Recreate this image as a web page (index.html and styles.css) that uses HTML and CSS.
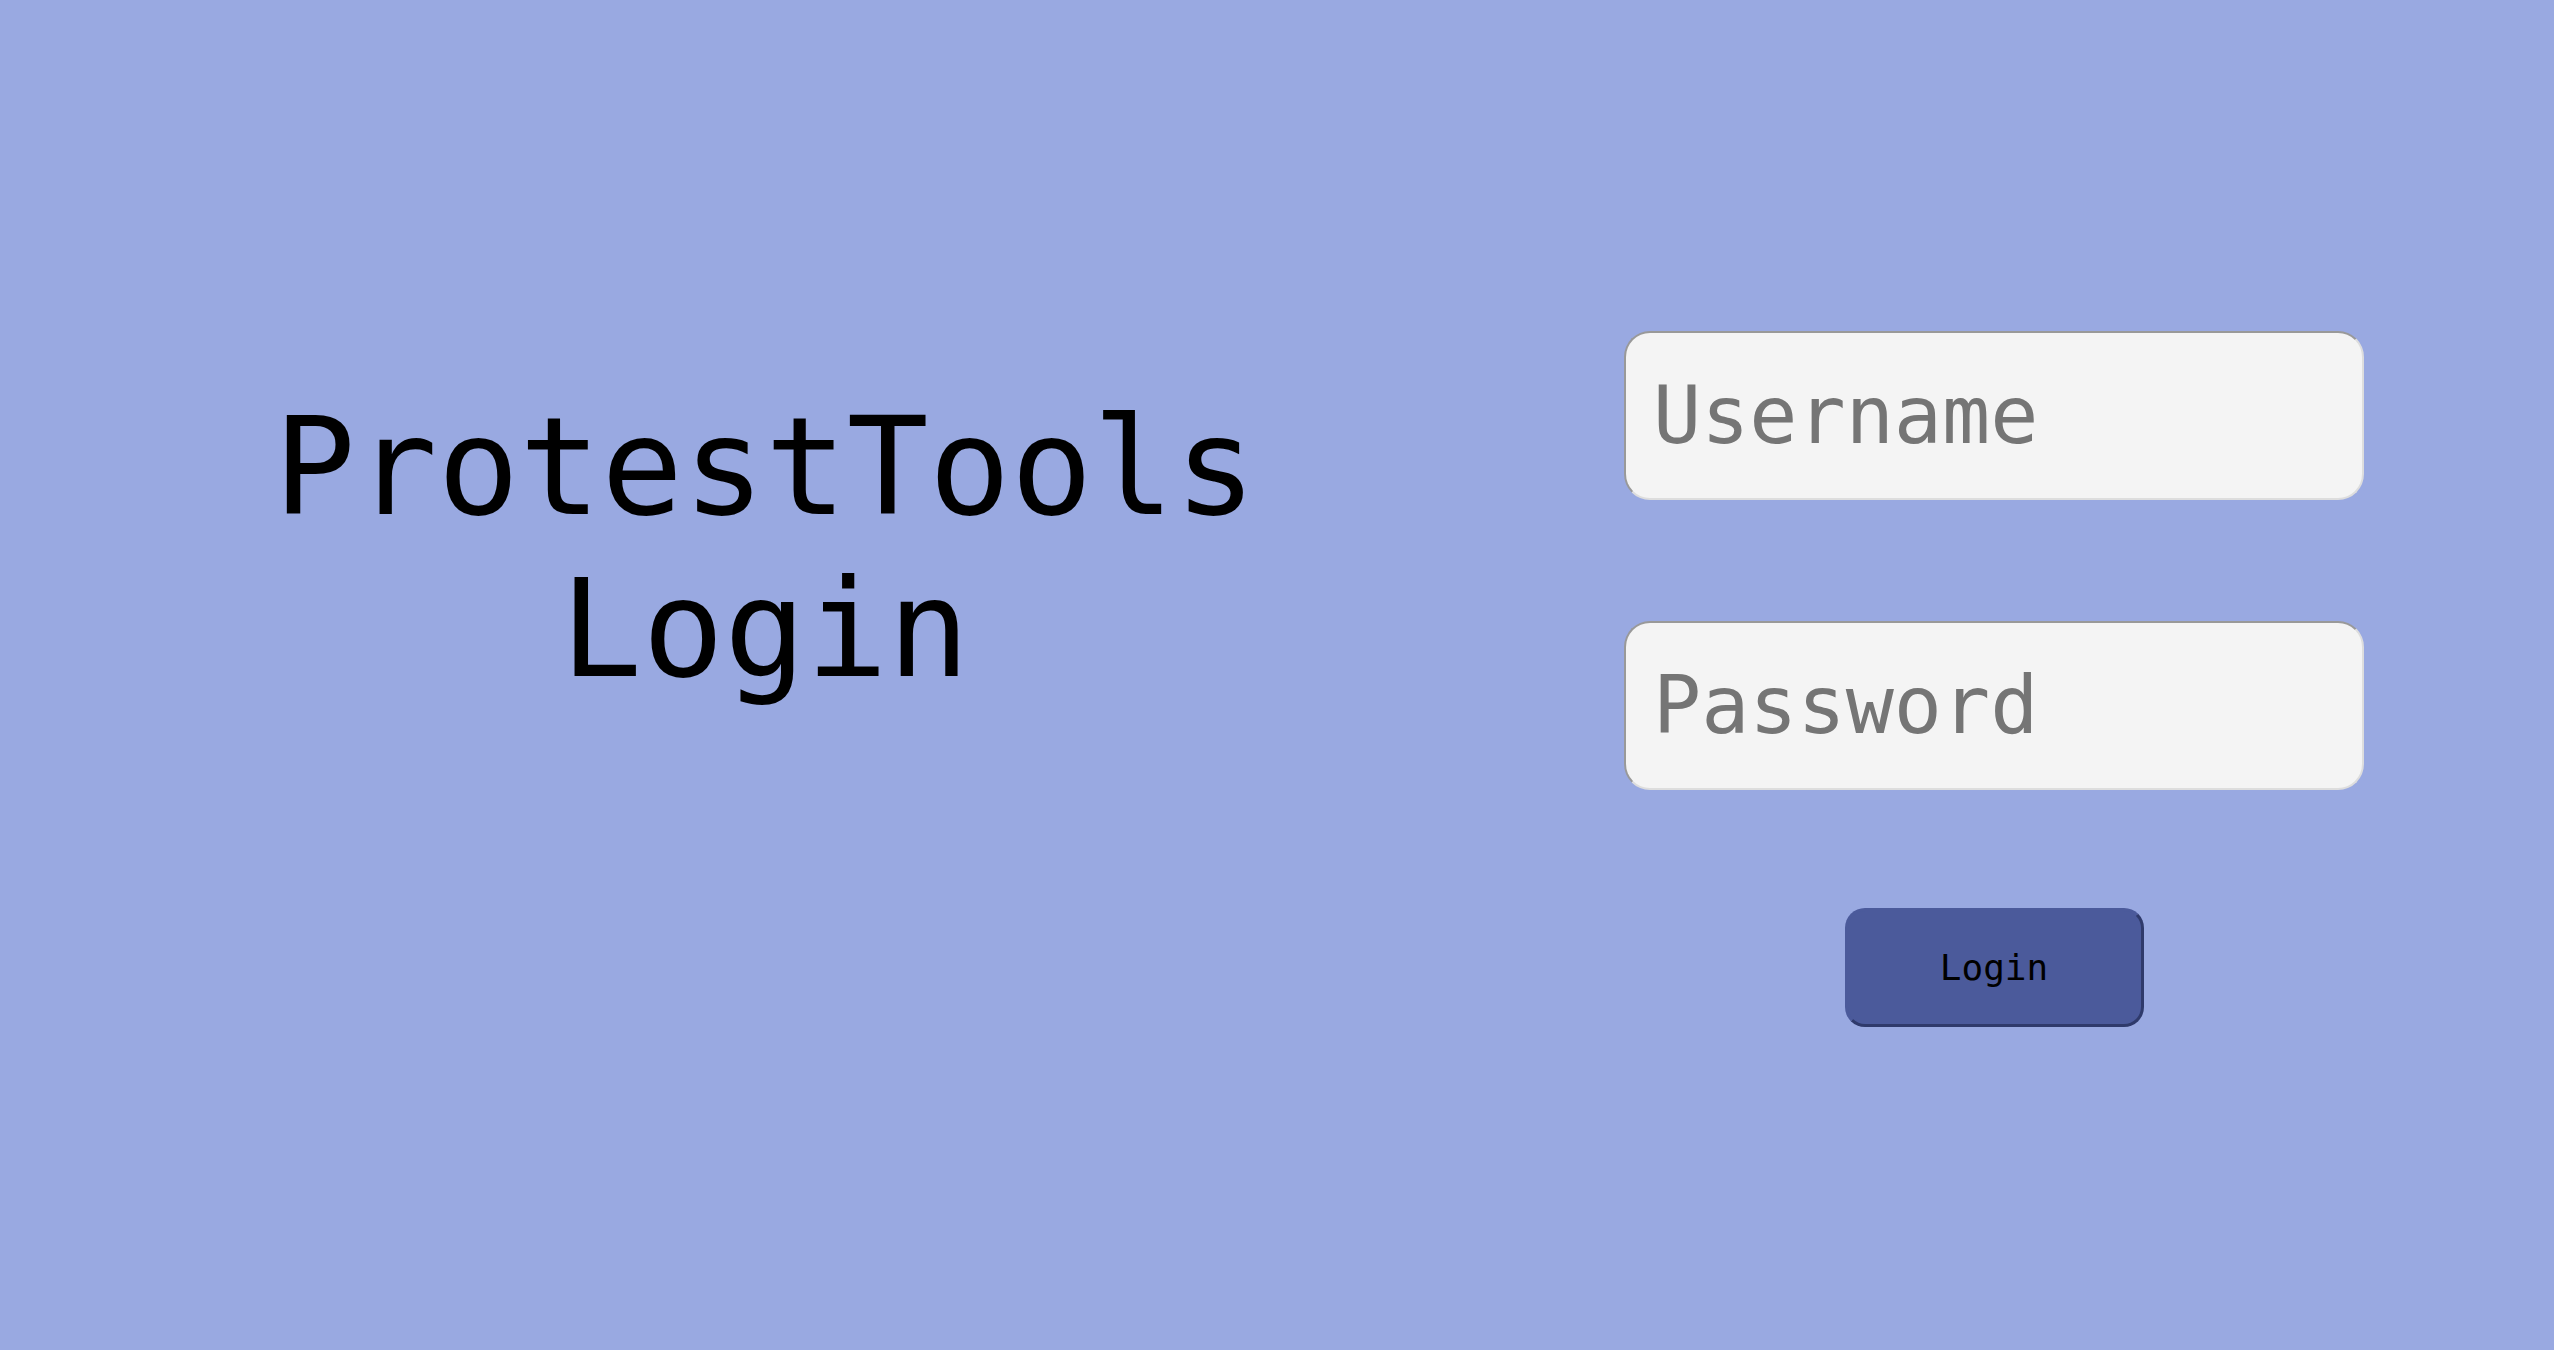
FILE: index.html
```html
<!DOCTYPE html>
<html lang="en">
<head>
<meta charset="utf-8">
<title>ProtestTools Login</title>
<link rel="stylesheet" href="styles.css">
</head>
<body>
<main class="page">
  <section class="intro">
    <h1 class="title">ProtestTools<br>Login</h1>
  </section>
  <form class="login-form">
    <input class="field" type="text" placeholder="Username">
    <input class="field" type="password" placeholder="Password">
    <button class="login-btn" type="button">Login</button>
  </form>
</main>
</body>
</html>
```

FILE: styles.css
```css
html, body {
  margin: 0;
  padding: 0;
  height: 100%;
}

body {
  background: #99a9e1;
  font-family: "DejaVu Sans Mono", "Liberation Mono", monospace;
}

.page {
  display: flex;
  align-items: flex-start;
  min-height: 100vh;
}

.intro {
  width: 1530px;
  padding-top: 386px;
  text-align: center;
}

.title {
  margin: 0;
  font-weight: normal;
  font-size: 136px;
  line-height: 162px;
  color: #000;
}

.login-form {
  margin-left: 94px;
  width: 740px;
  padding-top: 331px;
  display: flex;
  flex-direction: column;
  align-items: center;
}

.field {
  box-sizing: border-box;
  width: 740px;
  height: 169px;
  margin: 0 0 121px 0;
  padding: 0 0 0 27px;
  border: 2px solid;
  border-color: #999999 #dddddd #dddddd #999999;
  border-radius: 26px;
  background: #f4f4f4;
  font-family: "DejaVu Sans Mono", "Liberation Mono", monospace;
  font-size: 80px;
  color: #333;
  outline: none;
}

.field:last-of-type {
  margin-bottom: 0;
}

.field::placeholder {
  color: #757575;
  opacity: 1;
}

.login-btn {
  box-sizing: border-box;
  margin-top: 118px;
  width: 299px;
  height: 119px;
  border: 3px solid;
  border-color: #4b5a9b #2f3a6b #2f3a6b #4b5a9b;
  border-radius: 20px;
  background: #4b5a9b;
  color: #000;
  font-family: "DejaVu Sans Mono", "Liberation Mono", monospace;
  font-size: 36px;
  padding: 0;
  cursor: pointer;
}
```
